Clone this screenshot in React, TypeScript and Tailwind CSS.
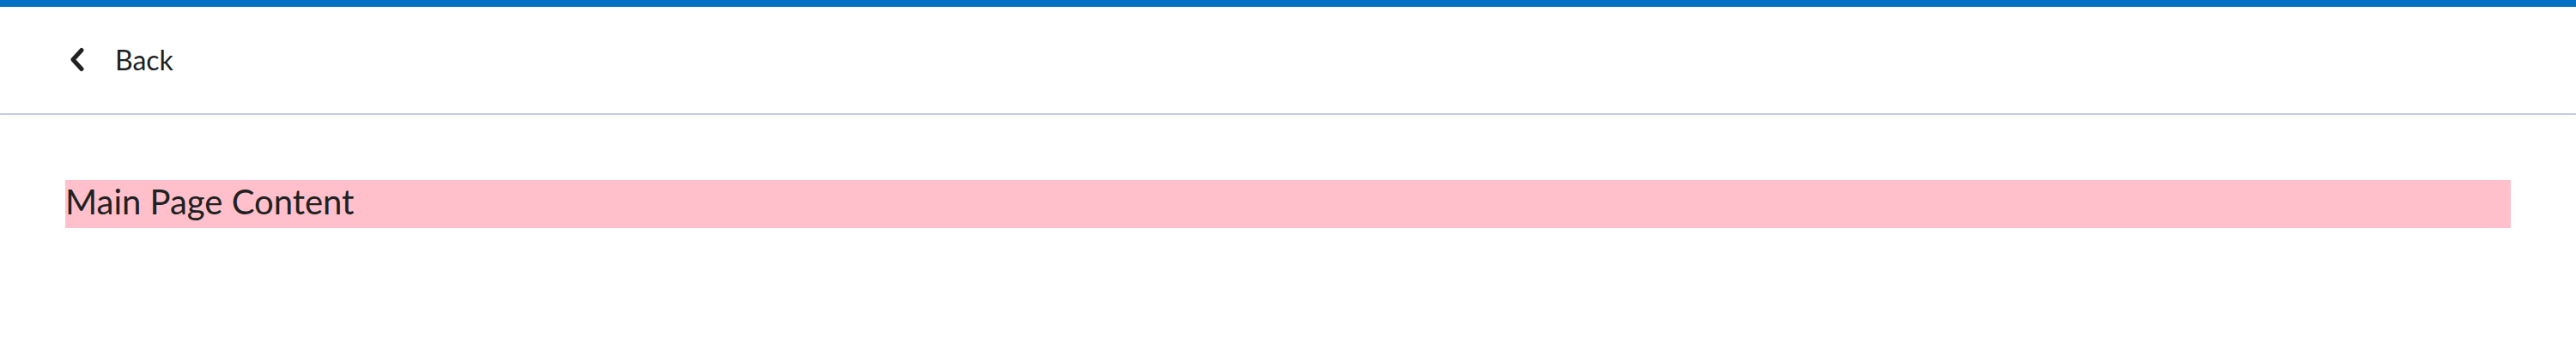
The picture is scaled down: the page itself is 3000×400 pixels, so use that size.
function ChevronLeftIcon() {
  return (
    <svg width="20" height="30" viewBox="0 0 20 30" fill="none" aria-hidden="true">
      <path
        d="M15 3.5 L5 14.5 L15 25.5"
        stroke="#202122"
        strokeWidth="5"
        strokeLinecap="round"
        strokeLinejoin="round"
      />
    </svg>
  );
}

export default function App() {
  return (
    <div className="min-h-[400px] bg-white font-['Lato','Liberation_Sans',sans-serif] text-[#202122]">
      <header className="border-t-8 border-b-2 border-t-[#0070c0] border-b-[#c6cdd6] bg-white shadow-[0_4px_4px_rgba(0,0,0,0.02)]">
        <div className="flex h-[124px] items-center pl-[80px]">
          <button type="button" className="flex items-center gap-[34px] text-[32px] leading-none">
            <ChevronLeftIcon />
            <span>Back</span>
          </button>
        </div>
      </header>
      <main className="px-[76px] pt-[76px]">
        <div className="bg-[#ffc0cb] pb-[6px] text-[40px] leading-[50px]">Main Page Content</div>
      </main>
    </div>
  );
}
